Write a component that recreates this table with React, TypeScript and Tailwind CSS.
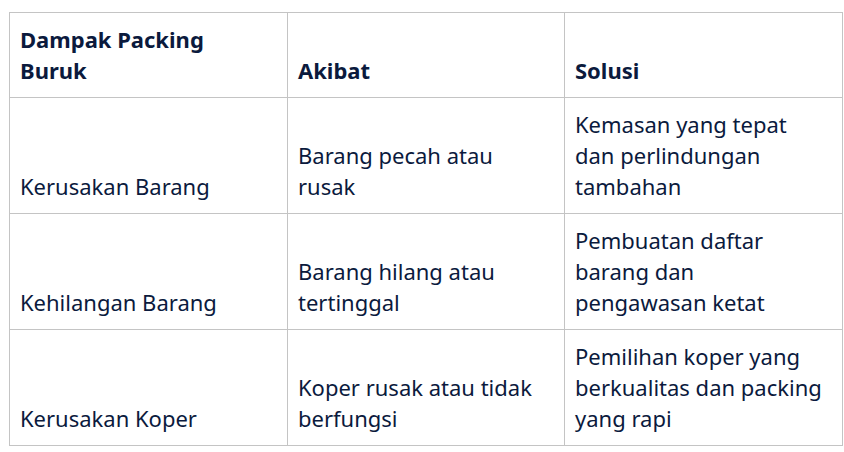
import React from "react";

const rows: string[][][] = [
  [["Kerusakan Barang"], ["Barang pecah atau", "rusak"], ["Kemasan yang tepat", "dan perlindungan", "tambahan"]],
  [["Kehilangan Barang"], ["Barang hilang atau", "tertinggal"], ["Pembuatan daftar", "barang dan", "pengawasan ketat"]],
  [["Kerusakan Koper"], ["Koper rusak atau tidak", "berfungsi"], ["Pemilihan koper yang", "berkualitas dan packing", "yang rapi"]],
];

function Lines({ lines }: { lines: string[] }) {
  return (
    <>
      {lines.map((l, i) => (
        <span key={i} className="block whitespace-nowrap">{l}</span>
      ))}
    </>
  );
}

export default function App() {
  return (
    <div className="w-[844px] h-[452px] bg-white pt-[12px] pl-[9px]" style={{ fontFamily: '"Noto Sans", "Open Sans", sans-serif' }}>
      <table className="border-collapse table-fixed w-[833px] text-[#0b1a3d] text-[22px] leading-[31px]">
        <colgroup>
          <col className="w-[278px]" />
          <col className="w-[277px]" />
          <col className="w-[278px]" />
        </colgroup>
        <thead>
          <tr className="h-[85px]">
            <th className="border border-[#c4c4c4] align-bottom text-left font-bold px-[10px] py-[11px]"><Lines lines={["Dampak Packing", "Buruk"]} /></th>
            <th className="border border-[#c4c4c4] align-bottom text-left font-bold px-[10px] py-[11px]">Akibat</th>
            <th className="border border-[#c4c4c4] align-bottom text-left font-bold px-[10px] py-[11px]">Solusi</th>
          </tr>
        </thead>
        <tbody>
          {rows.map((r, i) => (
            <tr key={i} className="h-[116px]">
              {r.map((c, j) => (
                <td key={j} className="border border-[#c4c4c4] align-bottom text-left px-[10px] py-[11px]"><Lines lines={c} /></td>
              ))}
            </tr>
          ))}
        </tbody>
      </table>
    </div>
  );
}
